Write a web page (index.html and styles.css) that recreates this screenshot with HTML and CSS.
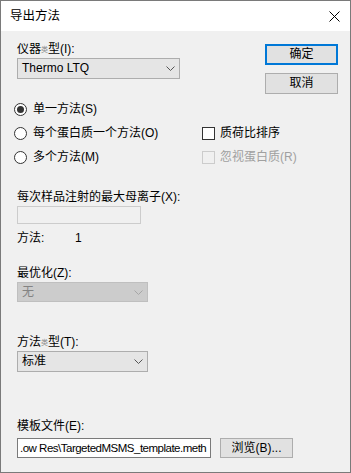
FILE: index.html
```html
<!DOCTYPE html>
<html>
<head>
<meta charset="utf-8">
<link rel="stylesheet" href="styles.css">
</head>
<body>
<div class="window">
  <div class="titlebar">
    <span class="title">导出方法</span>
    <svg class="close" width="11" height="11" viewBox="0 0 11 11"><path d="M0.5 0.5 L10.5 10.5 M10.5 0.5 L0.5 10.5" stroke="#000" stroke-width="1" fill="none"/></svg>
  </div>
  <div class="content">
    <div class="top">
      <div class="top-left">
        <div class="label l1">仪器<span class="tiny">类</span>型(I):</div>
        <div class="combo c1"><span>Thermo LTQ</span><svg class="chev" width="9" height="5" viewBox="0 0 9 5"><path d="M0.5 0.5 L4.5 4.5 L8.5 0.5" stroke="#555" fill="none"/></svg></div>
      </div>
      <div class="buttons">
        <div class="btn default">确定</div>
        <div class="btn">取消</div>
      </div>
    </div>
    <div class="options">
      <div class="opt"><span class="radio checked"></span>单一方法(S)</div>
      <div></div>
      <div class="opt"><span class="radio"></span>每个蛋白质一个方法(O)</div>
      <div class="opt"><span class="check"></span>质荷比排序</div>
      <div class="opt"><span class="radio"></span>多个方法(M)</div>
      <div class="opt disabled"><span class="check"></span>忽视蛋白质(R)</div>
    </div>
    <div class="label l2">每次样品注射的最大母离子(X):</div>
    <div class="textbox disabled-box"></div>
    <div class="label l3 methods"><span class="mlabel">方法:</span><span>1</span></div>
    <div class="label l4">最优化(Z):</div>
    <div class="combo c2 dis"><span>无</span><svg class="chev" width="9" height="5" viewBox="0 0 9 5"><path d="M0.5 0.5 L4.5 4.5 L8.5 0.5" stroke="#a6a6a6" fill="none"/></svg></div>
    <div class="label l5">方法<span class="tiny">类</span>型(T):</div>
    <div class="combo c3"><span>标准</span><svg class="chev" width="9" height="5" viewBox="0 0 9 5"><path d="M0.5 0.5 L4.5 4.5 L8.5 0.5" stroke="#555" fill="none"/></svg></div>
    <div class="label l6">模板文件(E):</div>
    <div class="filerow">
      <div class="filebox">.ow Res\TargetedMSMS_template.meth</div>
      <div class="btn browse">浏览(B)...</div>
    </div>
  </div>
</div>
</body>
</html>
```
FILE: styles.css
```css
* { box-sizing: border-box; }
html, body { margin: 0; padding: 0; }
body {
  width: 351px;
  height: 473px;
  font-family: "Liberation Sans", "Noto Sans CJK SC", sans-serif;
  font-size: 12px;
  color: #000;
}
.window {
  width: 351px;
  height: 473px;
  border: 1px solid #7a7a7a;
  background: #f0f0f0;
  display: flex;
  flex-direction: column;
}
.titlebar {
  height: 30px;
  background: #fff;
  display: flex;
  align-items: center;
  justify-content: space-between;
  padding: 0 10px 0 9px;
  flex: none;
}
.title { font-size: 12.5px; line-height: 15px; }
.close { display: block; }
.content {
  flex: 1;
  padding: 0 12px 0 16px;
  display: flex;
  flex-direction: column;
}
.top {
  display: flex;
  justify-content: space-between;
  align-items: flex-start;
}
.top-left { width: 163px; }
.label { line-height: 15px; height: 15px; white-space: nowrap; }
.tiny { font-size: 7px; color: #8a8a8a; vertical-align: 1px; }
.l1 { margin-top: 11px; }
.combo {
  display: flex;
  align-items: center;
  justify-content: space-between;
  border: 1px solid #adadad;
  background: #e5e5e5;
  padding: 0 4px 0 4px;
  line-height: 15px;
}
.combo .chev { display: block; }
.c1 { margin-top: 1px; height: 21px; width: 163px; }
.c2 { margin-top: 1px; height: 20px; width: 131px; }
.c3 { margin-top: 1px; height: 21px; width: 131px; }
.combo.dis { background: #cccccc; border-color: #bfbfbf; color: #838383; }
.buttons {
  margin-top: 13px;
  margin-bottom: -20px;
  width: 73px;
  display: flex;
  flex-direction: column;
  gap: 8px;
}
.btn {
  height: 21px;
  border: 1px solid #adadad;
  background: #e1e1e1;
  display: flex;
  align-items: center;
  justify-content: center;
  line-height: 15px;
}
.btn.default { border: 2px solid #0078d7; }
.options {
  margin-top: 18px;
  display: grid;
  grid-template-columns: 185px 1fr;
  grid-auto-rows: 24px;
}
.opt {
  display: flex;
  align-items: center;
  line-height: 15px;
  white-space: nowrap;
}
.radio {
  width: 13px;
  height: 13px;
  border: 1px solid #333;
  border-radius: 50%;
  background: #fff;
  margin-left: -3px;
  margin-right: 6px;
  position: relative;
  flex: none;
}
.radio.checked::after {
  content: "";
  position: absolute;
  left: 2px;
  top: 2px;
  width: 7px;
  height: 7px;
  border-radius: 50%;
  background: #333;
}
.check {
  width: 13px;
  height: 13px;
  border: 1px solid #333;
  background: #fff;
  margin-right: 5px;
  flex: none;
}
.opt.disabled { color: #a0a0a0; }
.opt.disabled .check { border-color: #cccccc; background: #f0f0f0; }
.l2 { margin-top: 21px; }
.textbox {
  margin-top: 1px;
  width: 124px;
  height: 18px;
  border: 1px solid #cccccc;
  background: #f0f0f0;
}
.l3 { margin-top: 7px; display: flex; }
.mlabel { width: 58px; }
.l4 { margin-top: 20px; }
.l5 { margin-top: 33px; }
.l6 { margin-top: 47px; }
.filerow {
  margin-top: 4px;
  display: flex;
  gap: 9px;
}
.filebox {
  width: 194px;
  height: 20px;
  border: 1px solid #7a7a7a;
  background: #fff;
  padding: 0 1px 0 2px;
  line-height: 18px;
  font-size: 11.5px;
  letter-spacing: -0.5px;
  white-space: nowrap;
  overflow: hidden;
}
.browse { width: 73px; height: 20px; }
```
